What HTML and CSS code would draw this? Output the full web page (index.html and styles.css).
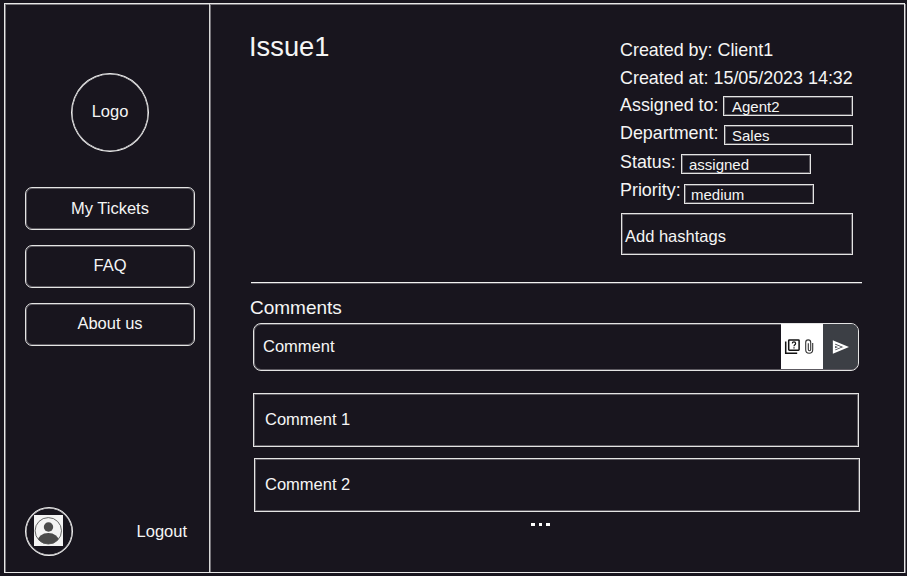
FILE: index.html
```html
<!DOCTYPE html>
<html lang="en">
<head>
<meta charset="utf-8">
<title>Issue1</title>
<link rel="stylesheet" href="styles.css">
</head>
<body>
<div class="app">
  <aside class="sidebar">
    <div class="logo">Logo</div>
    <nav class="nav">
      <a class="nav-item first line">My Tickets</a>
      <a class="nav-item line">FAQ</a>
      <a class="nav-item line">About us</a>
    </nav>
    <div class="account">
      <div class="avatar">
        <svg width="29" height="31" viewBox="0 0 29 31">
          <rect width="29" height="31" fill="#f3f3f3"/>
          <clipPath id="face"><circle cx="14.3" cy="15.8" r="13.2"/></clipPath>
          <circle cx="14.5" cy="12" r="4.7" fill="#4b4b4b"/>
          <ellipse cx="14.3" cy="26.2" rx="10.8" ry="8.2" fill="#4b4b4b" clip-path="url(#face)"/>
          <circle cx="14.3" cy="15.8" r="13.2" fill="none" stroke="#555" stroke-width=".9"/>
        </svg>
      </div>
      <a class="logout">Logout</a>
    </div>
  </aside>
  <main class="content">
    <header class="issue">
      <h1 class="title">Issue1</h1>
      <div class="meta">
        <div class="row">Created by: Client1</div>
        <div class="row">Created at: 15/05/2023 14:32</div>
        <div class="row"><span class="label assigned">Assigned to:</span><span class="field line agent">Agent2</span></div>
        <div class="row"><span class="label department">Department:</span><span class="field line sales">Sales</span></div>
        <div class="row"><span class="label status">Status:</span><span class="field line state">assigned</span></div>
        <div class="row"><span class="label priority">Priority:</span><span class="field line level">medium</span></div>
        <div class="hashtags line">Add hashtags</div>
      </div>
    </header>
    <h2 class="subtitle">Comments</h2>
    <div class="composer line">
      <span class="placeholder">Comment</span>
      <span class="attach">
        <svg width="42" height="45" viewBox="0 0 42 45" fill="none" stroke="#111">
          <path d="M4.7 17.5v11.7h11.5" stroke-width="1.5"/>
          <rect x="7.7" y="15.9" width="10.4" height="10.4" rx=".7" stroke-width="1.5"/>
          <path d="M11.3 19.4c.1-2 3.3-2 3.3 0 0 1.3-1.6 1.4-1.6 2.8M13 23.2v1.2" stroke-width="1.2"/>
          <path d="M31.7 19v6.8a3.5 3.5 0 0 1-7 0v-7.4a2.5 2.5 0 0 1 5 0v7.2a1.2 1.2 0 0 1-2.4 0v-6.4" stroke="#333" stroke-width="1.1"/>
        </svg>
      </span>
      <span class="send">
        <svg width="35" height="46" viewBox="0 0 35 46">
          <path d="M11 18L23 23L11 28z" fill="none" stroke="#fff" stroke-width="2.3"/>
          <path d="M11 20.8l5.5 2.2-5.5 2.3" fill="none" stroke="#fff" stroke-width="1.3"/>
        </svg>
      </span>
    </div>
    <div class="comment line">Comment 1</div>
    <div class="comment second line">Comment 2</div>
    <div class="more"><i></i><i></i><i></i></div>
  </main>
</div>
</body>
</html>
```

FILE: styles.css
```css
* { box-sizing: border-box; }
body {
  margin: 0;
  background: #18151e;
  color: #f5f5f5;
  font: 16.5px/20px "Liberation Sans", Arial, sans-serif;
  white-space: nowrap;
}
.app {
  display: flex;
  width: 901px;
  height: 570px;
  margin: 3px 0 0 4px;
  border: 1px solid #e8e8e8;
  box-shadow: inset 1px 1px #77747a, 1px 1px #77747a;
}
.line {
  border: 1px solid #e4e4e4;
  box-shadow: inset 0 0 0 1px #5c5960;
}
.sidebar {
  display: flex;
  flex: none;
  flex-direction: column;
  width: 205px;
  padding: 69px 14px 16px 20px;
  border-right: 1px solid #d8d8d8;
  box-shadow: 1px 0 #77747a;
}
.logo {
  display: grid;
  place-items: center;
  width: 78px;
  height: 79px;
  margin-left: 46px;
  padding-bottom: 3px;
  border: 1px solid #eee;
  box-shadow: inset 0 0 0 .5px #eee;
  border-radius: 50%;
}
.nav { display: grid; gap: 15px; margin-top: 35px; }
.nav-item {
  display: grid;
  place-items: center;
  height: 43px;
  padding-bottom: 3px;
  border-radius: 7px;
}
.first { padding-bottom: 1px; }
.account {
  display: flex;
  justify-content: space-between;
  align-items: center;
  margin-top: auto;
  padding-right: 8px;
}
.logout { margin-bottom: 2px; }
.avatar {
  display: grid;
  place-items: center;
  width: 48px;
  height: 49px;
  padding: 0 2px 2px 0;
  border: 1px solid #eee;
  box-shadow: inset 0 0 0 .5px #eee;
  border-radius: 50%;
}
.content { flex: none; width: 652px; margin-left: 41px; }
.issue {
  display: flex;
  justify-content: space-between;
  width: 611px;
  height: 279px;
  padding: 26px 9px 0 0;
  border-bottom: 1px solid #f2f2f2;
  box-shadow: 0 1px #55525a;
}
.title { margin: 1px 0 0 -2px; font-size: 27.3px; line-height: 32px; font-weight: 400; }
.meta { width: 233px; padding-top: 6px; font-size: 17.9px; }
.row { display: flex; height: 28px; padding-top: 4px; }
.field {
  width: 130px;
  height: 20px;
  padding-left: 7px;
  font-size: 15px;
  line-height: 20px;
}
.label { flex: none; margin-top: -1px; }
.hashtags {
  width: 232px;
  height: 42px;
  margin: 9px 0 0 1px;
  padding: 12px 0 0 3px;
  font-size: 16.5px;
}
.assigned { width: 103px; }
.department { width: 104px; }
.status { width: 61px; margin-top: 0; }
.priority { width: 64px; margin-top: 0; }
.agent { padding-left: 8px; }
.sales { margin-top: 1px; }
.state { margin-top: 2px; }
.level { margin-top: 4px; padding-left: 6px; }
.subtitle { margin: 15px 0 5px -1px; font-size: 19px; line-height: 20px; font-weight: 400; }
.composer {
  display: flex;
  width: 606px;
  height: 48px;
  margin-left: 2px;
  border-radius: 8px;
}
.placeholder { flex: 1; padding: 12px 0 0 9px; }
.attach { width: 42px; height: 45px; background: #fff; }
.send { width: 35px; height: 45px; background: #3c3f45; border-radius: 0 7px 7px 0; }
.attach svg, .send svg { display: block; }
.comment { width: 606px; height: 54px; margin: 22px 0 0 2px; padding: 15px 0 0 11px; }
.second { margin: 11px 0 0 3px; padding-left: 10px; }
.more { display: flex; gap: 4px; margin: 11px 0 0 280px; }
.more i { width: 3.6px; height: 3px; background: #fff; }
```
